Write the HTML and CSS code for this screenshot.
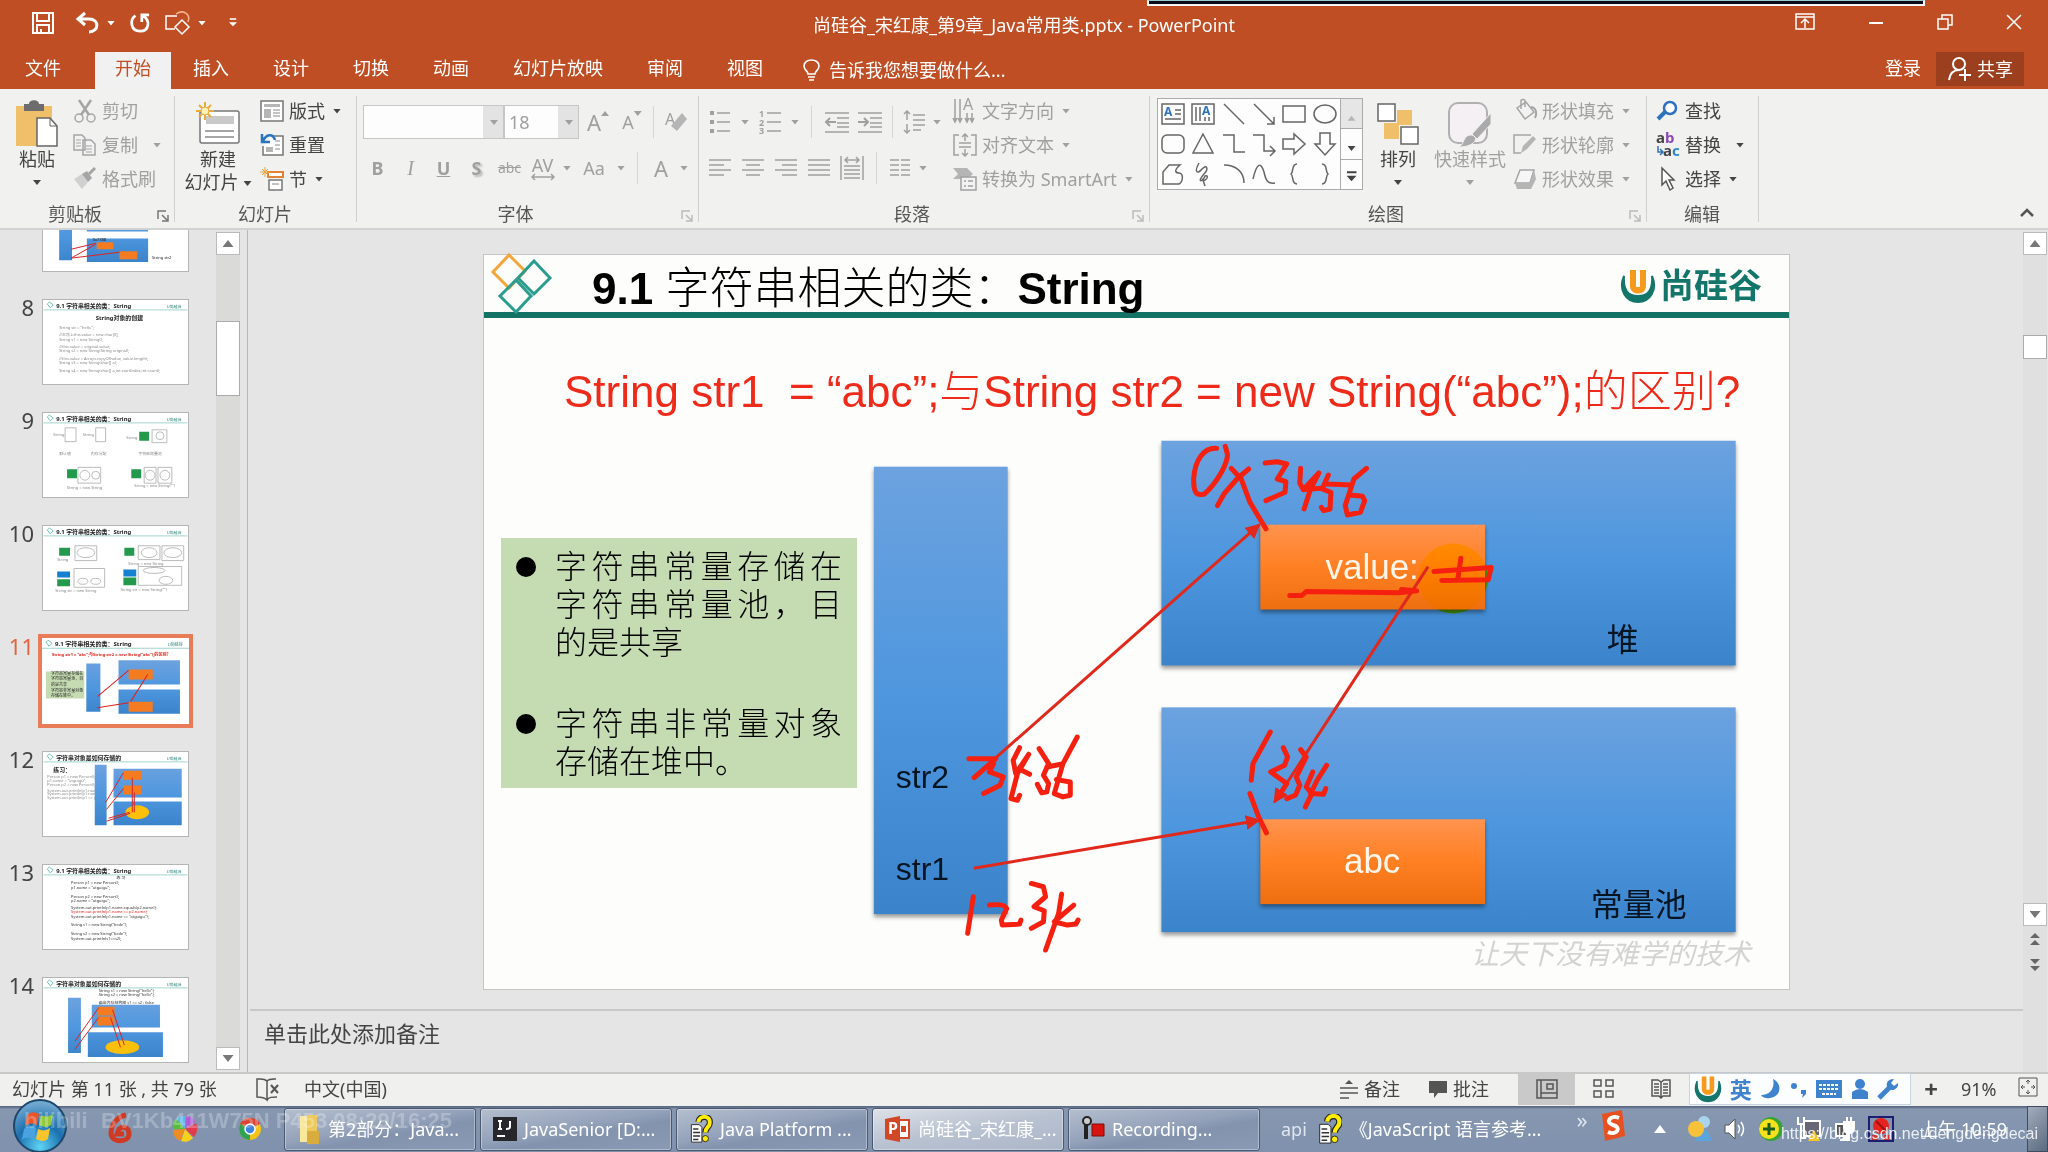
FILE: index.html
```html
<!DOCTYPE html>
<html lang="zh-CN">
<head>
  <meta charset="UTF-8">
  <meta name="viewport" content="width=device-width, initial-scale=1.0">
  <title>尚硅谷_宋红康_第9章_Java常用类.pptx - PowerPoint</title>
  <link rel="stylesheet" href="styles.css">
</head>
<body>
  <!-- shared drawings -->
  <svg class="defs" width="0" height="0">
    <defs>
      <linearGradient id="blue" x1="0" y1="0" x2="0" y2="1">
        <stop offset="0" stop-color="#6ca2df"/>
        <stop offset="0.5" stop-color="#4f97de"/>
        <stop offset="1" stop-color="#3b84cb"/>
      </linearGradient>
      <linearGradient id="orange" x1="0" y1="0" x2="0" y2="1">
        <stop offset="0" stop-color="#ff934f"/>
        <stop offset="0.5" stop-color="#ff8023"/>
        <stop offset="1" stop-color="#ee6f10"/>
      </linearGradient>
      <marker id="tip" viewBox="0 0 10 10" refX="9" refY="5" markerWidth="5" markerHeight="5" orient="auto">
        <path d="M0 0L10 5L0 10Z" fill="#e0281c"/>
      </marker>
      <symbol id="logo-u" viewBox="0 0 36 36">
        <path d="M4 8C-2 22 6 34 18 34C30 34 38 22 32 8C33 22 28 28 18 28C8 28 3 22 4 8Z" fill="#14766a" stroke="#14766a" stroke-width="2"/>
        <path d="M10 2V18C10 28 26 28 26 18V2H20V19H16V2Z" fill="#f59a1c"/>
      </symbol>
      <symbol id="help" viewBox="0 0 24 32">
        <path d="M1 11H10L13 14V31H1Z" fill="#fff" stroke="#222" stroke-width="1"/>
        <path d="M3 16H9M3 20H11M3 24H11M3 28H9" stroke="#333" stroke-width="1.5"/>
        <path d="M9 8C10 0 23 0 22 9C22 14 17 14 17 20" fill="none" stroke="#222" stroke-width="7"/>
        <path d="M9 8C10 0 23 0 22 9C22 14 17 14 17 20" fill="none" stroke="#ffee00" stroke-width="4.500"/>
        <circle cx="17" cy="27" r="3.500" fill="#ffee00" stroke="#222"/>
      </symbol>
      <symbol id="thumb-head" viewBox="0 0 146 85">
        <path d="M4 4L6 2L10 5L7 8Z" fill="none" stroke="#4fb3a6" stroke-width=".8"/>
        <path d="M0 10H146" stroke="#9fd3cb" stroke-width="1"/>
        <text x="125" y="8" class="t-logo">U尚硅谷</text>
      </symbol>
    </defs>
  </svg>

  <header class="titlebar">
    <div class="record-strip"></div>
    <div class="qat">
      <button class="save" aria-label="保存"><svg width="22" height="22" viewBox="0 0 22 22"><path d="M1 1H21V21H1ZM5 1V9H17V1M5 21V13H17V21M9 21V17" fill="none" stroke="#fff" stroke-width="2"/></svg></button>
      <button aria-label="撤消"><svg width="24" height="22" viewBox="0 0 24 22"><path d="M9 1L2 7L9 13M3 7H13C24 7 23 20 13 20" fill="none" stroke="#fff" stroke-width="3"/></svg><i class="dd"></i></button>
      <button aria-label="重复"><svg width="20" height="22" viewBox="0 0 22 22"><path d="M6 3C-1 8 1 20 11 20C21 20 23 8 14 3M13 10V2H21" fill="none" stroke="#fff" stroke-width="3"/></svg></button>
      <button aria-label="形状"><svg width="26" height="24" viewBox="0 0 26 24"><path d="M12 5H1V18H10M17 9L24 16L17 23L10 16Z" fill="none" stroke="#fff" stroke-width="1.500"/><path d="M11 3C18 -2 26 3 23 11" fill="none" stroke="#f7b48c" stroke-width="1.500"/></svg><i class="dd"></i></button>
      <button class="custom" aria-label="自定义"><svg width="8" height="10" viewBox="0 0 10 12"><path d="M1 1H9" stroke="#fff" stroke-width="2"/><path d="M0 5H10L5 10Z" fill="#fff"/></svg></button>
    </div>
    <h1 class="doc-title">尚硅谷_宋红康_第9章_Java常用类.pptx - PowerPoint</h1>
    <div class="win-controls">
      <button aria-label="功能区显示选项"><svg width="20" height="17" viewBox="0 0 20 17"><path d="M1 1H19V16H1ZM1 4H19M10 15V6M6 10L10 6L14 10" fill="none" stroke="#fff" stroke-width="1.500"/></svg></button>
      <button aria-label="最小化"><svg width="16" height="16" viewBox="0 0 16 16"><path d="M1 9H15" stroke="#fff" stroke-width="2"/></svg></button>
      <button aria-label="还原"><svg width="16" height="16" viewBox="0 0 16 16"><path d="M1 5H11V15H1ZM5 5V1H15V11H11" fill="none" stroke="#fff" stroke-width="1.500"/></svg></button>
      <button aria-label="关闭"><svg width="16" height="16" viewBox="0 0 16 16"><path d="M1 1L15 15M15 1L1 15" stroke="#fff" stroke-width="1.500"/></svg></button>
    </div>
  </header>

  <nav class="tabs">
    <a class="file" href="#">文件</a>
    <a class="active" href="#">开始</a>
    <a href="#">插入</a>
    <a href="#">设计</a>
    <a href="#">切换</a>
    <a href="#">动画</a>
    <a href="#">幻灯片放映</a>
    <a href="#">审阅</a>
    <a href="#">视图</a>
    <button class="tell-me"><svg width="17" height="22" viewBox="0 0 17 22"><path d="M5 15C5 12 1 11 1 7C1 -1 16 -1 16 7C16 11 12 12 12 15ZM5 18H12M6 21H11" fill="none" stroke="#fff" stroke-width="1.600"/></svg>告诉我您想要做什么...</button>
    <a class="login" href="#">登录</a>
    <button class="share"><svg width="24" height="24" viewBox="0 0 24 24"><circle cx="12" cy="7" r="6" fill="none" stroke="#fff" stroke-width="2"/><path d="M2 23C3 16 7 13 12 13M18 12V24M12 18H24" fill="none" stroke="#fff" stroke-width="2"/></svg>共享</button>
  </nav>

  <section class="ribbon">
    <div class="group g-clip">
      <div class="body">
        <button class="big"><svg width="44" height="48" viewBox="0 0 44 48"><path d="M1 6H37V46H1Z" fill="#efc069"/><path d="M9 4H14C14 -1 24 -1 24 4H29V11H9Z" fill="#6d6d6d"/><path d="M22 18H35L42 26V46H22Z" fill="#fff" stroke="#666" stroke-width="1.500"/><path d="M35 18V26H42" fill="none" stroke="#666"/></svg><span>粘贴</span><i class="dd"></i></button>
        <div class="stack off">
          <button><svg width="24" height="24" viewBox="0 0 24 24"><path d="M6 1L16 16M18 1L8 16" stroke="#a5a5a5" stroke-width="2.500"/><circle cx="6" cy="19" r="4" fill="none" stroke="#a5a5a5" stroke-width="1.500"/><circle cx="18" cy="19" r="4" fill="none" stroke="#a5a5a5" stroke-width="1.500"/></svg>剪切</button>
          <button><svg width="24" height="24" viewBox="0 0 24 24"><path d="M1 2H9L12 5V17H1ZM10 7H18L22 11V22H10Z" fill="#f2f2f2" stroke="#a5a5a5" stroke-width="1.500"/><path d="M3 7H8M3 10H8M3 13H8M13 13H19M13 16H19M13 19H19" stroke="#a5a5a5"/></svg>复制<i class="dd far"></i></button>
          <button><svg width="24" height="24" viewBox="0 0 24 24"><path d="M1 12L9 7L15 15L9 22Z" fill="#d0d0d0"/><path d="M9 7L14 4L19 11L15 15Z" fill="#a5a5a5"/><path d="M16 7L22 1" stroke="#a5a5a5" stroke-width="3"/></svg>格式刷</button>
        </div>
      </div>
      <div class="label">剪贴板<svg class="launch" width="12" height="12" viewBox="0 0 12 12"><path d="M1 9V1H9M5 5L10 10M11 5V11H5" fill="none" stroke="#777" stroke-width="1.500"/></svg></div>
    </div>

    <div class="group g-slides">
      <div class="body">
        <button class="big"><svg width="44" height="44" viewBox="0 0 44 44"><rect x="4" y="9" width="39" height="32" rx="2" fill="#fff" stroke="#777" stroke-width="1.500"/><path d="M10 14H38V22H10Z" fill="#c9c9c9"/><path d="M9 29H38M9 35H38" stroke="#888" stroke-width="1.500"/><path d="M9 0V18M0 9H18M3 3L15 15M15 3L3 15" stroke="#e9aa3c" stroke-width="2"/><circle cx="9" cy="9" r="4" fill="#fff0b8" stroke="#e9aa3c"/></svg><span>新建</span><span>幻灯片<i class="dd"></i></span></button>
        <div class="stack">
          <button><svg width="24" height="24" viewBox="0 0 24 24"><path d="M1 2H23V22H1Z" fill="#fff" stroke="#777" stroke-width="1.500"/><path d="M4 5H20V8H4ZM4 10H11V19H4Z" fill="#b5b5b5"/><path d="M13 11H20M13 14H20M13 17H20" stroke="#888"/></svg>版式<i class="dd"></i></button>
          <button><svg width="24" height="24" viewBox="0 0 24 24"><path d="M12 3H23V22H3V13" fill="#fff" stroke="#777" stroke-width="1.500"/><path d="M6 14H13V19H6Z" fill="#b5b5b5"/><path d="M15 8H20M15 12H20M15 16H20" stroke="#888"/><path d="M2 1V9H10M3 8C6 1 13 0 15 7" fill="none" stroke="#2b74c0" stroke-width="2.500"/></svg>重置</button>
          <button><svg width="24" height="24" viewBox="0 0 24 24"><path d="M8 5H23V10H8Z" fill="#fff" stroke="#e08334" stroke-width="2"/><path d="M9 13H22V23H9Z" fill="#fff" stroke="#777" stroke-width="1.500"/><path d="M12 17H19" stroke="#888"/><path d="M5 0V10M0 5H10M2 2L8 8M8 2L2 8" stroke="#e9a23c"/></svg>节<i class="dd"></i></button>
        </div>
      </div>
      <div class="label">幻灯片</div>
    </div>

    <div class="group g-font off">
      <div class="body rows">
        <div class="row">
          <div class="combo name"><select aria-label="字体"><option></option></select><i class="dd"></i></div>
          <div class="combo size"><select aria-label="字号"><option>18</option></select><i class="dd"></i></div>
          <button class="w38 grow" aria-label="增大字号">A<i class="dd up"></i></button>
          <button class="w30 shrink" aria-label="减小字号">A<i class="dd"></i></button>
          <span class="sep"></span>
          <button class="w34" aria-label="清除格式"><svg width="24" height="26" viewBox="0 0 24 26"><text x="0" y="16" class="ico-a">A</text><path d="M6 17L17 4L22 10L12 22Z" fill="#b5b5b5"/></svg></button>
        </div>
        <div class="row">
          <button class="w33"><b>B</b></button>
          <button class="w33 ital">I</button>
          <button class="w33"><u>U</u></button>
          <button class="w33 shad">S</button>
          <button class="w33 strike">abc</button>
          <button class="w33 av">AV<svg width="24" height="7" viewBox="0 0 24 7"><path d="M1 3H23M4 0L1 3L4 6M20 0L23 3L20 6" fill="none" stroke="#a0a0a0" stroke-width="1.500"/></svg></button>
          <i class="dd"></i>
          <button class="w38">Aa</button>
          <i class="dd"></i>
          <span class="sep wide"></span>
          <button class="w30 color">A</button>
          <i class="dd"></i>
        </div>
      </div>
      <div class="label">字体<svg class="launch" width="12" height="12" viewBox="0 0 12 12"><path d="M1 9V1H9M5 5L10 10M11 5V11H5" fill="none" stroke="#bbb" stroke-width="1.500"/></svg></div>
    </div>

    <div class="group g-para off">
      <div class="body">
        <div class="rows para-left">
          <div class="row">
            <button class="w34" aria-label="项目符号"><svg width="20" height="22" viewBox="0 0 20 22"><path d="M0 2H4M0 11H4M0 20H4" stroke="#a0a0a0" stroke-width="4"/><path d="M7 2H20M7 11H20M7 20H20" stroke="#a0a0a0" stroke-width="1.500"/></svg></button><i class="dd"></i>
            <button class="w34" aria-label="编号"><svg width="22" height="24" viewBox="0 0 22 24"><text x="0" y="7" class="ico-n">1</text><text x="0" y="16" class="ico-n">2</text><text x="0" y="24" class="ico-n">3</text><path d="M8 3H22M8 12H22M8 21H22" stroke="#a0a0a0" stroke-width="1.500"/></svg></button><i class="dd"></i>
            <span class="sep wide"></span>
            <button class="w33" aria-label="减少缩进"><svg width="24" height="22" viewBox="0 0 24 22"><path d="M0 2H24M12 7H24M12 12H24M12 16H24M0 21H24" stroke="#a0a0a0" stroke-width="1.500"/><path d="M11 11H1M5 7L1 11L5 15" fill="none" stroke="#a0a0a0" stroke-width="2"/></svg></button>
            <button class="w33" aria-label="增加缩进"><svg width="24" height="22" viewBox="0 0 24 22"><path d="M0 2H24M12 7H24M12 12H24M12 16H24M0 21H24" stroke="#a0a0a0" stroke-width="1.500"/><path d="M0 11H10M6 7L10 11L6 15" fill="none" stroke="#a0a0a0" stroke-width="2"/></svg></button>
            <span class="sep"></span>
            <button class="w30" aria-label="行距"><svg width="22" height="26" viewBox="0 0 22 26"><path d="M4 11V2M1 5L4 2L7 5M4 15V24M1 21L4 24L7 21M10 6H22M10 11H22M10 16H22M10 21H18" fill="none" stroke="#a0a0a0" stroke-width="1.500"/></svg></button><i class="dd"></i>
          </div>
          <div class="row">
            <button class="w33" aria-label="左对齐"><svg width="22" height="18" viewBox="0 0 22 18"><path d="M0 1H22M0 6H15M0 11H22M0 16H15" stroke="#a0a0a0" stroke-width="1.500"/></svg></button>
            <button class="w33" aria-label="居中"><svg width="22" height="18" viewBox="0 0 22 18"><path d="M0 1H22M4 6H18M0 11H22M4 16H18" stroke="#a0a0a0" stroke-width="1.500"/></svg></button>
            <button class="w33" aria-label="右对齐"><svg width="22" height="18" viewBox="0 0 22 18"><path d="M0 1H22M7 6H22M0 11H22M7 16H22" stroke="#a0a0a0" stroke-width="1.500"/></svg></button>
            <button class="w33" aria-label="两端对齐"><svg width="22" height="18" viewBox="0 0 22 18"><path d="M0 1H22M0 6H22M0 11H22M0 16H22" stroke="#a0a0a0" stroke-width="1.500"/></svg></button>
            <button class="w33" aria-label="分散对齐"><svg width="24" height="24" viewBox="0 0 24 24"><path d="M1 0V24M23 0V24M4 10H20M4 14H20M4 18H20M4 22H20M5 4H19M8 1L5 4L8 7M16 1L19 4L16 7" fill="none" stroke="#a0a0a0" stroke-width="1.500"/></svg></button>
            <span class="sep wide"></span>
            <button class="w30" aria-label="分栏"><svg width="20" height="18" viewBox="0 0 20 18"><path d="M0 1H9M0 6H9M0 11H9M0 16H9M11 1H20M11 6H20M11 11H20M11 16H20" stroke="#a0a0a0" stroke-width="1.500"/></svg></button><i class="dd"></i>
          </div>
        </div>
        <div class="stack">
          <button><svg width="24" height="26" viewBox="0 0 24 26"><path d="M2 1V22M7 1V22M14 15V22M19 15V22M0 20L2 24L4 20M5 20L7 24L9 20M12 20L14 24L16 20M17 20L19 24L21 20" fill="none" stroke="#a0a0a0" stroke-width="1.500"/><text x="10" y="12" class="ico-a">A</text></svg>文字方向<i class="dd"></i></button>
          <button><svg width="24" height="24" viewBox="0 0 24 24"><path d="M6 2H1V22H6M18 2H23V22H18M12 1V8M9 4L12 1L15 4M12 16V23M9 20L12 23L15 20M6 10H18M6 14H18" fill="none" stroke="#a0a0a0" stroke-width="1.500"/></svg>对齐文本<i class="dd"></i></button>
          <button><svg width="24" height="24" viewBox="0 0 24 24"><path d="M0 1H14L20 7L14 12H0L5 7Z" fill="#b5b5b5"/><path d="M8 10H23V23H8Z" fill="#f2f2f2" stroke="#a0a0a0" stroke-width="1.500"/><path d="M11 14H13M15 14H20M11 19H13M15 19H20" stroke="#a0a0a0" stroke-width="1.500"/></svg>转换为 SmartArt<i class="dd"></i></button>
        </div>
      </div>
      <div class="label">段落<svg class="launch" width="12" height="12" viewBox="0 0 12 12"><path d="M1 9V1H9M5 5L10 10M11 5V11H5" fill="none" stroke="#bbb" stroke-width="1.500"/></svg></div>
    </div>

    <div class="group g-draw">
      <div class="body">
        <div class="gallery">
          <div class="shapes">
            <svg viewBox="0 0 24 24"><path d="M1 2H23V22H1Z"/><text x="3" y="14" class="ico-b">A</text><path d="M14 8H20M14 12H20M4 17H20"/></svg>
            <svg viewBox="0 0 24 24"><path d="M1 2H23V22H1ZM5 5V19M9 5V19M14 15V19M18 15V19"/><text x="11" y="13" class="ico-b">A</text></svg>
            <svg viewBox="0 0 24 24"><path d="M2 2L22 22"/></svg>
            <svg viewBox="0 0 24 24"><path d="M2 2L22 22M22 15V22H15"/></svg>
            <svg viewBox="0 0 24 24"><path d="M1 4H23V20H1Z"/></svg>
            <svg viewBox="0 0 24 24"><ellipse cx="12" cy="12" rx="11" ry="9"/></svg>
            <svg viewBox="0 0 24 24"><rect x="1" y="3" width="22" height="18" rx="5"/></svg>
            <svg viewBox="0 0 24 24"><path d="M12 2L22 21H2Z"/></svg>
            <svg viewBox="0 0 24 24"><path d="M1 3H12V20H23"/></svg>
            <svg viewBox="0 0 24 24"><path d="M1 3H12V19H22M18 14L23 19L18 24"/></svg>
            <svg viewBox="0 0 24 24"><path d="M1 7H12V2L23 12L12 22V17H1Z"/></svg>
            <svg viewBox="0 0 24 24"><path d="M7 1H17V12H22L12 23L2 12H7Z"/></svg>
            <svg viewBox="0 0 24 24"><path d="M2 22V10L8 3H19C12 9 15 11 18 11C23 11 22 20 18 22Z"/></svg>
            <svg viewBox="0 0 24 24"><path d="M8 1C2 12 8 11 10 8C16 1 18 7 13 12C5 21 12 20 14 14C19 12 15 20 12 18L14 24"/></svg>
            <svg viewBox="0 0 24 24"><path d="M2 3C14 3 22 10 22 21"/></svg>
            <svg viewBox="0 0 24 24"><path d="M1 17C5 0 9 0 12 10C14 20 17 22 23 21"/></svg>
            <svg viewBox="0 0 24 24"><path d="M15 2C9 2 12 10 9 12C12 14 9 22 15 22"/></svg>
            <svg viewBox="0 0 24 24"><path d="M9 2C15 2 12 10 15 12C12 14 15 22 9 22"/></svg>
          </div>
          <div class="gal-scroll"><button aria-label="上一行" class="up"><i class="dd"></i></button><button aria-label="下一行"><i class="dd"></i></button><button aria-label="其他"><i class="dd line"></i></button></div>
        </div>
        <button class="big arrange"><svg width="42" height="44" viewBox="0 0 42 44"><path d="M20 8H35V23H20ZM7 21H22V37H7Z" fill="#efc069"/><path d="M1 2H18V19H1ZM24 25H41V42H24Z" fill="#fff" stroke="#666" stroke-width="1.500"/></svg><span>排列</span><i class="dd"></i></button>
        <button class="big quick off"><svg width="46" height="48" viewBox="0 0 46 48"><rect x="2" y="3" width="38" height="40" rx="9" fill="#f4f0f4" stroke="#b0b0b0" stroke-width="2"/><path d="M12 47C18 44 16 34 25 35C33 38 27 47 12 47Z" fill="#aaa" stroke="#f0f0f0"/><path d="M25 34L44 13V24L30 39Z" fill="#aaa" stroke="#f0f0f0"/></svg><span>快速样式</span><i class="dd"></i></button>
        <div class="stack off">
          <button><svg width="24" height="24" viewBox="0 0 24 24"><path d="M4 9L13 3L21 13L12 20Z" fill="#f2f2f2" stroke="#a5a5a5" stroke-width="1.500"/><path d="M8 10V2C8 0 12 0 12 2V8" fill="none" stroke="#a5a5a5" stroke-width="1.500"/><path d="M18 8C24 9 24 15 22 19" fill="none" stroke="#a5a5a5" stroke-width="2"/></svg>形状填充<i class="dd"></i></button>
          <button><svg width="24" height="24" viewBox="0 0 24 24"><path d="M18 2H1V20H8" fill="none" stroke="#a5a5a5" stroke-width="1.500"/><path d="M8 20L10 13L20 3L23 6L14 16Z" fill="#b5b5b5"/></svg>形状轮廓<i class="dd"></i></button>
          <button><svg width="24" height="24" viewBox="0 0 24 24"><path d="M7 3H21L17 16H2Z" fill="#f6f6f6" stroke="#a5a5a5" stroke-width="1.500"/><path d="M21 3L23 12L18 22H4L2 16H17Z" fill="#b5b5b5"/></svg>形状效果<i class="dd"></i></button>
        </div>
      </div>
      <div class="label">绘图<svg class="launch" width="12" height="12" viewBox="0 0 12 12"><path d="M1 9V1H9M5 5L10 10M11 5V11H5" fill="none" stroke="#bbb" stroke-width="1.500"/></svg></div>
    </div>

    <div class="group g-edit">
      <div class="body">
        <div class="stack">
          <button><svg width="24" height="24" viewBox="0 0 24 24"><circle cx="14" cy="9" r="6" fill="#fff" stroke="#2e71bd" stroke-width="2.500"/><path d="M9 13L2 20" stroke="#2e71bd" stroke-width="4"/></svg>查找</button>
          <button><svg width="24" height="26" viewBox="0 0 24 26"><text x="0" y="11" class="ico-r">a<tspan fill="#8b4bb5">b</tspan></text><text x="7" y="24" class="ico-r">a<tspan fill="#2e86d4">c</tspan></text><path d="M2 14V20H6M4 17L7 20L4 23" fill="none" stroke="#2e71bd" stroke-width="1.500"/></svg>替换<i class="dd far"></i></button>
          <button><svg width="24" height="24" viewBox="0 0 24 24"><path d="M6 1L6 18L10 14L14 23L17 21L13 13H18Z" fill="#fff" stroke="#555" stroke-width="1.500"/></svg>选择<i class="dd"></i></button>
        </div>
      </div>
      <div class="label">编辑</div>
    </div>
    <button class="collapse" aria-label="折叠功能区"><svg width="14" height="9" viewBox="0 0 14 9"><path d="M1 8L7 2L13 8" fill="none" stroke="#555" stroke-width="2.500"/></svg></button>
  </section>

  <main class="work">
    <aside class="slides-pane">
      <ol class="thumbs">
        <li><span></span><svg class="thumb" viewBox="0 0 146 85"><path d="M16 20H29V74H16ZM44 20H106V45H44ZM44 52H106V76H44Z" fill="url(#blue)"/><path d="M54 56H71V63H54ZM77 65H95V73H77Z" fill="#f47b20"/><path d="M28 63L53 57M28 72L53 58M28 72L77 66" stroke="#d22" fill="none"/><text x="110" y="73" class="t-xs">String str2</text><text x="50" y="55" class="t-xs">0x7788</text></svg></li>
        <li><span>8</span><svg class="thumb" viewBox="0 0 146 85"><use href="#thumb-head"/><text x="13" y="8" class="t-title">9.1 字符串相关的类：String</text><text x="53" y="20" class="t-title">String对象的创建</text><g class="t-code"><text x="16" y="29">String str = "hello";</text><text x="16" y="36">//本质上this.value = new char[0];</text><text x="16" y="41">String s1 = new String();</text><text x="16" y="49">//this.value = original.value;</text><text x="16" y="53">String s2 = new String(String original);</text><text x="16" y="61">//this.value = Arrays.copyOf(value, value.length);</text><text x="16" y="65">String s3 = new String(char[] a);</text><text x="16" y="73">String s4 = new String(char[] a,int startIndex,int count);</text></g></svg></li>
        <li><span>9</span><svg class="thumb" viewBox="0 0 146 85"><use href="#thumb-head"/><text x="13" y="8" class="t-title">9.1 字符串相关的类：String</text><path d="M22 15H33V29H22ZM53 15H63V29H53ZM110 17H125V30H110ZM35 55H58V71H35ZM102 55H114V71H102ZM116 55H130V71H116Z" class="t-line"/><circle cx="118" cy="23" r="4" class="t-line"/><circle cx="42" cy="63" r="5" class="t-line"/><circle cx="53" cy="63" r="4" class="t-line"/><circle cx="108" cy="63" r="5" class="t-line"/><circle cx="123" cy="63" r="5" class="t-line"/><path d="M97 19H107V28H97ZM24 57H34V66H24ZM89 57H99V66H89Z" fill="#22994d"/><g class="t-code"><text x="10" y="23">String</text><text x="40" y="23">String</text><text x="84" y="26">String</text><text x="16" y="42">默认值</text><text x="48" y="42">内存分配</text><text x="96" y="43">字符串常量池</text><text x="24" y="77">String = new String</text><text x="92" y="75">String = new String("")</text></g></svg></li>
        <li><span>10</span><svg class="thumb" viewBox="0 0 146 85"><use href="#thumb-head"/><text x="13" y="8" class="t-title">9.1 字符串相关的类：String</text><path d="M32 20H54V35H32ZM96 20H118V34H96ZM120 20H142V35H120ZM31 43H62V62H31ZM96 41H140V60H96Z" class="t-line"/><ellipse cx="43" cy="27" rx="9" ry="5" class="t-line"/><ellipse cx="107" cy="27" rx="8" ry="5" class="t-line"/><ellipse cx="131" cy="27" rx="9" ry="5" class="t-line"/><ellipse cx="40" cy="56" rx="5" ry="3" class="t-line"/><ellipse cx="53" cy="56" rx="5" ry="3" class="t-line"/><ellipse cx="112" cy="45" rx="11" ry="3" class="t-line"/><ellipse cx="124" cy="55" rx="7" ry="4" class="t-line"/><path d="M16 22H27V30H16ZM82 22H92V30H82ZM14 54H27V61H14ZM81 52H94V60H81Z" fill="#22994d"/><path d="M14 46H27V52H14ZM81 44H94V51H81Z" fill="#1580d0"/><g class="t-code"><text x="14" y="35">String</text><text x="86" y="39">String = new String</text><text x="12" y="67">String str = new String</text><text x="78" y="66">String str = new String("")</text></g></svg></li>
        <li class="current"><span>11</span><svg class="thumb" viewBox="0 0 146 85"><use href="#thumb-head"/><text x="13" y="8" class="t-title">9.1 字符串相关的类：String</text><text x="10" y="18" class="t-red">String str1 = “abc”;与String str2 = new String(“abc”);的区别？</text><path d="M4 33H42V60H4Z" fill="#c5dcb2"/><g class="t-xs"><text x="9" y="37">字符串常量存储在</text><text x="9" y="42">字符串常量池，目</text><text x="9" y="47">的是共享</text><text x="9" y="53">字符串非常量对象</text><text x="9" y="58">存储在堆中。</text></g><path d="M44 25H58V73H44ZM76 22H137V46H76ZM76 51H137V75H76Z" fill="url(#blue)"/><path d="M86 31H110V41H86ZM86 63H110V73H86Z" fill="#f47b20"/><path d="M55 58L86 32M55 69L86 64M105 36L88 63" stroke="#d22" fill="none"/></svg></li>
        <li><span>12</span><svg class="thumb" viewBox="0 0 146 85"><use href="#thumb-head"/><text x="13" y="8" class="t-title">字符串对象是如何存储的</text><text x="10" y="20" class="t-title">练习：</text><g class="t-code"><text x="4" y="26">Person p1 = new Person();</text><text x="4" y="30">p1.name = "atguigu";</text><text x="4" y="34">Person p2 = new Person();</text><text x="4" y="40">System.out.println(p1.name);</text><text x="4" y="44">System.out.println(p1.name);</text><text x="4" y="48">System.out.println(p1 == p2);</text></g><path d="M52 13H64V74H52ZM71 17H140V46H71ZM71 50H140V74H71Z" fill="url(#blue)"/><path d="M81 19H99V28H81ZM81 34H99V43H81Z" fill="#f47b20"/><ellipse cx="95" cy="61" rx="12" ry="7" fill="#fcbf0b"/><path d="M63 51L81 21M64 58L81 37M66 67L87 61M64 70L88 62M90 26V61M92 41V61" stroke="#d22" fill="none"/></svg></li>
        <li><span>13</span><svg class="thumb" viewBox="0 0 146 85"><use href="#thumb-head"/><text x="13" y="8" class="t-title">9.1 字符串相关的类：String</text><text x="74" y="14" class="t-xs">练 习</text><g class="t-code dark"><text x="28" y="19">Person p1 = new Person();</text><text x="28" y="24">p1.name = "atguigu";</text><text x="28" y="33">Person p2 = new Person();</text><text x="28" y="37">p2.name = "atguigu";</text><text x="28" y="45">System.out.println(p1.name.equals(p2.name));</text><text x="28" y="49" fill="#d22">System.out.println(p1.name == p2.name);</text><text x="28" y="54">System.out.println(p1.name == "atguigu");</text><text x="28" y="62">String s1 = new String("bcde");</text><text x="28" y="71">String s2 = new String("bcde");</text><text x="28" y="76">System.out.println(s1==s2);</text></g></svg></li>
        <li><span>14</span><svg class="thumb" viewBox="0 0 146 85"><use href="#thumb-head"/><text x="13" y="8" class="t-title">字符串对象是如何存储的</text><g class="t-code dark"><text x="56" y="14">String s1 = new String("hello");</text><text x="56" y="18">String s2 = new String("hello");</text><text x="56" y="26">画出内存结构图 s1 == s2 : false</text></g><path d="M25 20H38V76H25ZM49 27H118V50H49ZM45 55H121V80H45Z" fill="url(#blue)"/><path d="M55 29H72V38H55ZM55 39H72V48H55Z" fill="#f47b20"/><ellipse cx="80" cy="70" rx="17" ry="7" fill="#fcbf0b"/><path d="M32 64L56 30M32 72L56 40M68 40L78 70M70 32L82 68" stroke="#d22" fill="none"/></svg></li>
      </ol>
      <div class="vscroll">
        <button aria-label="向上"><i class="dd up"></i></button>
        <div class="bar"></div>
        <button aria-label="向下"><i class="dd"></i></button>
      </div>
    </aside>

    <div class="editor">
      <div class="stage">
        <article class="slide">
          <header class="slide-head">
            <svg class="diamonds" width="62" height="60" viewBox="0 0 62 60" fill="none" stroke-width="3"><path d="M25 1L41 17L25 34L9 18Z" stroke="#f2a63b"/><path d="M50 7L66 24L50 40L34 24Z" stroke="#2b9d8e"/><path d="M32 26L47 42L32 58L16 42Z" stroke="#2b9d8e"/></svg>
            <h2>9.1 <span>字符串相关的类：</span>String</h2>
            <div class="brand"><svg width="36" height="36"><use href="#logo-u"/></svg>尚硅谷</div>
          </header>
          <p class="question">String str1  = “abc”;与String str2 = new String(“abc”);的区别?</p>
          <ul class="points">
            <li>字符串常量存储在字符串常量池，目的是共享</li>
            <li>字符串非常量对象存储在堆中。</li>
          </ul>
          <svg class="diagram" viewBox="0 0 1306 735">
            <g class="box" fill="url(#blue)">
              <rect x="390" y="212" width="134" height="448"/>
              <rect x="678" y="186" width="575" height="225"/>
              <rect x="678" y="453" width="575" height="225"/>
            </g>
            <g class="box" fill="url(#orange)">
              <rect x="777" y="270" width="225" height="85"/>
              <rect x="777" y="565" width="225" height="85"/>
            </g>
            <g class="names">
              <text x="412" y="534">str2</text>
              <text x="412" y="626">str1</text>
              <text x="1124" y="397">堆</text>
              <text x="1108" y="662">常量池</text>
            </g>
            <g class="values">
              <text x="889" y="324">value:</text>
              <text x="889" y="619">abc</text>
            </g>
            <text x="1268" y="710" class="motto">让天下没有难学的技术</text>
            <circle class="spot" cx="970" cy="324" r="35"/>
            <g stroke="#e0281c" stroke-width="3">
              <path d="M490 523L776 270" marker-end="url(#tip)"/>
              <path d="M490 614L776 566" marker-end="url(#tip)"/>
              <path d="M945 312L791 548" marker-end="url(#tip)"/>
            </g>
            <!-- pen strokes, one group per part of the slide -->
            <g class="ink" transform="translate(656 -9) scale(.4337 .3333)">
              <path d="M178 608C150 605 128 640 125 700C125 740 130 752 150 745C180 710 205 650 203 625L198 602"/>
              <path d="M212 668L235 700L255 770L292 850M252 670L225 700L195 745L180 780"/>
              <path d="M290 652L318 648L340 655L318 700L338 708L336 740L292 765"/>
              <path d="M372 668L370 712L378 732L414 682M414 682L395 730L380 790M378 732L418 728"/>
              <path d="M436 688L422 730L442 740L440 790L425 795L420 785M432 715L490 718"/>
              <path d="M524 668L495 700L475 780L480 808L510 800L520 765L515 752L485 748"/>
              <path d="M347 1050L375 1050L385 1038L600 1042L640 1036L605 1032"/>
              <path d="M680 978L812 966L805 1003L698 1005M742 938L735 1000"/>
            </g>
            <g class="ink" transform="translate(-4 366) scale(.4337 .3333)">
              <path d="M1128 415L1190 415L1140 472M1185 430L1175 455L1207 470L1200 495L1162 520"/>
              <path d="M1245 382L1230 420L1236 460L1266 402M1266 402L1240 460L1225 535L1240 540L1245 525M1250 450L1268 462"/>
              <path d="M1290 385L1312 430L1300 465L1312 490L1308 515L1296 518L1286 492M1308 440L1340 432"/>
              <path d="M1378 350L1345 430L1325 520L1345 530L1362 525L1362 485L1330 478"/>
              <path d="M1138 830L1125 940M1175 855Q1210 850 1215 865L1203 900L1205 915L1245 912L1248 900"/>
              <path d="M1272 790L1300 800L1305 830L1278 860L1302 872L1300 905L1272 925"/>
              <path d="M1342 822L1335 880L1305 990M1370 855L1325 905L1355 915L1375 912L1380 900"/>
            </g>
            <g class="ink" transform="translate(656 366) scale(.4337 .3333)">
              <path d="M302 335L262 430L258 480M255 520L275 590L293 638"/>
              <path d="M332 382L342 410L335 435L303 455L340 490L320 530"/>
              <path d="M372 388L385 410L362 470L370 495L360 525L340 535"/>
              <path d="M400 455L385 500L398 520L383 560M432 435L410 480L395 520L425 522L430 505"/>
            </g>
          </svg>
        </article>
      </div>
      <div class="notes">单击此处添加备注</div>
    </div>
    <div class="vscroll main-scroll">
      <button aria-label="向上滚动"><i class="dd up"></i></button>
      <div class="bar"></div>
      <button aria-label="向下滚动"><i class="dd"></i></button>
      <button class="page" aria-label="上一张"><svg width="12" height="14" viewBox="0 0 12 14"><path d="M1 6L6 1L11 6ZM1 13L6 8L11 13Z" fill="#666"/></svg></button>
      <button class="page" aria-label="下一张"><svg width="12" height="14" viewBox="0 0 12 14"><path d="M1 1L6 6L11 1ZM1 8L6 13L11 8Z" fill="#666"/></svg></button>
    </div>
  </main>

  <section class="status">
    <span class="count">幻灯片 第 11 张 , 共 79 张</span>
    <svg width="24" height="24" viewBox="0 0 24 24"><path d="M11 4C8 1 4 2 1 2V20C4 20 8 20 11 23ZM11 4C13 2 15 2 18 2H20M11 23C13 20 16 20 21 20" fill="none" stroke="#555" stroke-width="1.500"/><path d="M15 8L22 16M22 8L15 16" stroke="#555" stroke-width="2"/></svg>
    <span class="lang">中文(中国)</span>
    <div class="status-right">
      <button class="note-btn"><svg width="18" height="20" viewBox="0 0 18 20"><path d="M5 5L9 1L13 5Z" fill="#555"/><path d="M0 9H18M0 14H18M0 19H9" stroke="#555" stroke-width="1.500"/></svg>备注</button>
      <button class="note-btn"><svg width="18" height="18" viewBox="0 0 18 18"><path d="M0 1H18V13H9L5 18V13H0Z" fill="#555"/></svg>批注</button>
      <button class="view on" aria-label="普通视图"><svg width="22" height="20" viewBox="0 0 22 20"><path d="M1 1H21V19H1ZM5 1V19M5 14H21M11 5H17V10H11Z" fill="none" stroke="#555" stroke-width="1.500"/></svg></button>
      <button class="view" aria-label="幻灯片浏览"><svg width="22" height="20" viewBox="0 0 22 20"><path d="M1 1H8V7H1ZM13 1H20V7H13ZM1 12H8V18H1ZM13 12H20V18H13Z" fill="none" stroke="#555" stroke-width="1.500"/></svg></button>
      <button class="view" aria-label="阅读视图"><svg width="20" height="20" viewBox="0 0 20 20"><path d="M10 3L7 1H1V17H8L10 19L12 17H19V1H13ZM10 3V19M3 5H8M3 8H8M3 11H8M3 14H8M12 5H17M12 8H17M12 11H17M12 14H17" fill="none" stroke="#555" stroke-width="1.500"/></svg></button>
      <div class="ime">
        <svg width="28" height="28"><use href="#logo-u"/></svg>
        <b>英</b>
        <svg width="22" height="22" viewBox="0 0 22 22"><path d="M13 1C22 5 22 18 10 20C6 21 2 19 1 17C11 17 15 9 13 1Z" fill="#3f83cf"/></svg>
        <svg width="18" height="22" viewBox="0 0 18 22"><circle cx="4" cy="8" r="3" fill="#3f83cf"/><path d="M11 12H16V16L12 20L13 16H11Z" fill="#3f83cf"/></svg>
        <svg width="28" height="22" viewBox="0 0 28 22"><rect x="1" y="2" width="26" height="18" fill="#3f83cf"/><path d="M4 7H24M4 11H24M7 16H21" stroke="#fff" stroke-width="2" stroke-dasharray="3 1"/></svg>
        <svg width="18" height="22" viewBox="0 0 18 22"><circle cx="9" cy="6" r="5" fill="#3f83cf"/><path d="M1 21V14Q9 8 17 14V21Z" fill="#3f83cf"/></svg>
        <svg width="22" height="22" viewBox="0 0 22 22"><path d="M2 20L12 10" stroke="#3f83cf" stroke-width="5"/><path d="M17 1C9 1 8 8 12 11C16 14 22 10 21 5L17 8L14 5Z" fill="#3f83cf"/></svg>
      </div>
      <button class="plus">+</button>
      <span class="zoom">91%</span>
      <button class="fit" aria-label="适应窗口"><svg width="20" height="20" viewBox="0 0 20 20"><path d="M1 1H19V19H1ZM10 3V7M10 13V17M3 10H7M13 10H17M8 5L10 3L12 5M8 15L10 17L12 15M5 8L3 10L5 12M15 8L17 10L15 12" fill="none" stroke="#555"/></svg></button>
    </div>
  </section>

  <footer class="taskbar">
    <button class="start" aria-label="开始菜单"><svg width="56" height="56" viewBox="0 0 56 56"><defs><radialGradient id="orb" cx=".5" cy=".9" r=".9"><stop offset="0" stop-color="#5fd3f5"/><stop offset=".5" stop-color="#1b6fae"/><stop offset="1" stop-color="#7db0d4"/></radialGradient></defs><circle cx="28" cy="28" r="26" fill="url(#orb)" stroke="#1d4669" stroke-width="2"/><path d="M15 17C19 13 23 14 27 16L25 27C21 25 17 25 13 28Z" fill="#e8562a"/><path d="M29 17C33 19 37 19 41 16L39 27C35 30 31 29 27 27Z" fill="#92c83e"/><path d="M12 31C16 28 20 28 24 30L22 41C18 39 14 39 10 42Z" fill="#4aa3e0"/><path d="M26 31C30 33 34 33 38 30L36 41C32 44 28 43 24 41Z" fill="#fbc42d"/></svg></button>
    <div class="pins">
      <a href="#" aria-label="录屏"><svg width="24" height="30" viewBox="0 0 24 30"><path d="M18 1C9 3 3 10 3 20C4 29 21 29 21 20C21 13 15 12 11 15L9 20H16" fill="none" stroke="#cf3a25" stroke-width="5"/></svg></a>
      <a href="#" aria-label="相册"><svg width="26" height="28" viewBox="0 0 26 28"><path d="M13 14L4 4C8 0 12 1 14 2Z" fill="#5db7e8"/><path d="M13 14L14 1C20 1 22 5 23 7Z" fill="#b35bd6"/><path d="M13 14L24 8C27 15 24 19 22 22Z" fill="#e33b4e"/><path d="M13 14L21 23C16 28 12 27 9 26Z" fill="#f6d21c"/><path d="M13 14L8 26C2 23 1 18 1 15Z" fill="#f08c21"/><path d="M13 14L1 14C0 9 2 6 4 4Z" fill="#58bd3d"/></svg></a>
      <a href="#" aria-label="Chrome"><svg width="24" height="24" viewBox="0 0 24 24"><circle cx="12" cy="12" r="11" fill="#f3c317"/><path d="M12 12L2 7C6 -1 19 -1 22 7Z" fill="#da4233"/><path d="M12 12L12 23C3 23 -1 14 2 7Z" fill="#2fa352"/><circle cx="12" cy="12" r="5" fill="#3f83e0" stroke="#fff" stroke-width="1.500"/></svg></a>
    </div>
    <div class="tasks">
      <button><svg width="24" height="32" viewBox="0 0 24 32"><path d="M3 3H12V29H3Z" fill="#f9e79b"/><path d="M10 2H20V28H10Z" fill="#ecc95a"/><path d="M10 18H22V31H10Z" fill="#d9ad3d"/></svg>第2部分：Java...</button>
      <button><svg width="24" height="24" viewBox="0 0 24 24"><path d="M0 0H24V24H0Z" fill="#26262b"/><path d="M5 4H9M7 4V12M5 12H9M17 4V10Q17 12 13 12M4 19H12" fill="none" stroke="#fff" stroke-width="2"/></svg>JavaSenior [D:...</button>
      <button><svg width="24" height="28"><use href="#help"/></svg>Java Platform ...</button>
      <button class="on"><svg width="26" height="26" viewBox="0 0 26 26"><path d="M12 4H24V22H12Z" fill="#fff" stroke="#d24726" stroke-width="2"/><path d="M16 10H21V16H16Z" fill="#d24726"/><path d="M0 3L15 0V26L0 23Z" fill="#d24726"/><text x="3" y="18" class="ico-p">P</text></svg>尚硅谷_宋红康_...</button>
      <button><svg width="24" height="28" viewBox="0 0 24 28"><path d="M5 8V24" stroke="#222" stroke-width="4"/><circle cx="6" cy="6" r="4" fill="#ccc" stroke="#222" stroke-width="2"/><path d="M11 9H23V21H11Z" fill="#d8130f" stroke="#7a0c0a"/></svg>Recording...</button>
    </div>
    <div class="links">
      <span>api</span>
      <a href="#"><svg width="24" height="30"><use href="#help"/></svg>《JavaScript 语言参考...</a>
      <span class="more">»</span>
    </div>
    <div class="tray">
      <svg class="sogou" width="26" height="32" viewBox="0 0 26 32"><path d="M2 4L22 0L25 26L5 31Z" fill="#e8511f"/><path d="M19 8C10 4 5 13 13 15C22 17 17 26 8 22" fill="none" stroke="#fff" stroke-width="4"/></svg>
      <svg class="tri" width="12" height="8" viewBox="0 0 12 8"><path d="M0 8L6 0L12 8Z" fill="#fff"/></svg>
      <svg width="24" height="28" viewBox="0 0 24 28"><circle cx="16" cy="7" r="6" fill="#a8d4ee"/><path d="M8 26C8 12 22 10 23 26Z" fill="#5aa5dc"/><circle cx="8" cy="14" r="8" fill="#f6c23a"/></svg>
      <svg width="22" height="24" viewBox="0 0 22 24"><path d="M1 8H5L11 2V22L5 16H1Z" fill="#fff" stroke="#555"/><path d="M14 8Q17 12 14 16M17 5Q22 12 17 19" fill="none" stroke="#fff" stroke-width="1.500"/></svg>
      <svg width="26" height="26" viewBox="0 0 26 26"><circle cx="13" cy="13" r="12" fill="#3aa335"/><circle cx="11" cy="13" r="10" fill="#f6e21c"/><path d="M11 7V19M5 13H17" stroke="#1c5f1c" stroke-width="3"/></svg>
      <svg width="26" height="26" viewBox="0 0 26 26"><path d="M8 5H24V20H8Z" fill="#667" stroke="#fff" stroke-width="2"/><path d="M2 1V8H8V1M5 8V22H10" fill="none" stroke="#fff" stroke-width="2"/><path d="M12 25L18 14L24 25Z" fill="#f7c427"/></svg>
      <svg width="22" height="26" viewBox="0 0 22 26"><path d="M2 8H13V20H2Z" fill="#555" stroke="#fff" stroke-width="2"/><path d="M10 6H20V12Q20 17 15 17Q10 17 10 12ZM13 6V1M17 6V1M15 17V24H6" fill="#fff" stroke="#fff" stroke-width="2"/></svg>
      <svg width="26" height="26" viewBox="0 0 26 26"><path d="M1 1H25V25H1Z" fill="#8492ad" stroke="#1c1c70" stroke-width="2"/><circle cx="13" cy="10" r="8" fill="#e5231f"/><path d="M8 5L18 15" stroke="#a00f0f" stroke-width="2"/><path d="M4 24H10V19H4ZM16 24H22V19H16Z" fill="#c33"/></svg>
      <time>上午 10:59</time>
    </div>
    <button class="desktop" aria-label="显示桌面"></button>
    <div class="mark-left"><span class="bili">bilibili</span>BV1Kb411W75N P453 08:29/16:25</div>
    <div class="mark-right">https://blog.csdn.net/dengdengdecai</div>
  </footer>
</body>
</html>
```
FILE: styles.css
```css
* {
  box-sizing: border-box;
}
body {
  margin: 0;
  height: 100vh;
  display: flex;
  flex-direction: column;
  overflow: hidden;
  font-family: "Noto Sans", "Noto Sans CJK SC", sans-serif;
  font-size: 18px;
  line-height: 24px;
  color: #444;
  background: #e5e5e5;
}
button {
  border: 0;
  padding: 0;
  background: none;
  font: inherit;
  color: inherit;
  white-space: nowrap;
}
a {
  color: inherit;
  text-decoration: none;
}
svg {
  flex: none;
  overflow: visible;
}
.defs {
  position: absolute;
}
.dd {
  display: inline-block;
  flex: none;
  width: 8px;
  height: 5px;
  background: currentColor;
  clip-path: polygon(0 0, 100% 0, 50% 100%);
}
.dd.up {
  clip-path: polygon(50% 0, 100% 100%, 0 100%);
}

/* title bar */
.titlebar {
  position: relative;
  height: 52px;
  flex: none;
  display: flex;
  align-items: center;
  justify-content: space-between;
  padding: 0 26px 6px 32px;
  background: #c04e25;
  color: #fff;
}
.record-strip {
  position: absolute;
  top: 0;
  left: 56%;
  right: 6%;
  height: 6px;
  background: #0a0a18;
  border: 2px solid #f5f5f5;
  border-top: 1px solid #9cc;
}
.qat {
  display: flex;
  align-items: center;
  gap: 15px;
}
.qat button {
  display: flex;
  align-items: center;
  gap: 7px;
}
.qat .save {
  margin-right: 7px;
}
.qat .custom {
  margin-left: 8px;
}
.doc-title {
  position: absolute;
  left: 0;
  right: 0;
  text-align: center;
  margin: 0;
  top: 13px;
  font-size: 18px;
  font-weight: 400;
  pointer-events: none;
}
.win-controls {
  display: flex;
  gap: 53px;
}

/* tabs */
.tabs {
  height: 37px;
  flex: none;
  display: flex;
  align-items: stretch;
  background: #c04e25;
  color: #fff;
  line-height: 32px;
}
.tabs a {
  padding: 0 22px;
}
.tabs .file {
  padding: 0 34px 0 25px;
}
.tabs .active {
  padding: 0 20px;
  background: #f1f1f1;
  color: #c04e25;
}
.tell-me {
  display: flex;
  align-items: center;
  gap: 9px;
  margin: 0 0 2px 18px;
}
.tabs .login {
  margin-left: auto;
  padding: 0 15px;
}
.share {
  display: flex;
  align-items: center;
  gap: 6px;
  height: 34px;
  margin-right: 24px;
  padding: 0 11px;
  background: #9c3f1f;
}

/* ribbon */
.ribbon {
  display: flex;
  flex: none;
  height: 141px;
  padding-top: 5px;
  background: #f1f1f0;
  border-bottom: 2px solid #d2d2d2;
}
.group {
  position: relative;
  flex: none;
  display: flex;
  flex-direction: column;
}
.group::after {
  content: "";
  position: absolute;
  right: 0;
  top: 2px;
  bottom: 6px;
  width: 1px;
  background: #d0d0d0;
}
.g-clip { width: 175px; }
.g-slides { width: 182px; }
.g-font { width: 342px; }
.g-para { width: 451px; }
.g-draw { width: 497px; }
.g-edit { width: 112px; }
.body {
  display: flex;
  flex: none;
  height: 102px;
}
.label {
  padding-right: 25px;
  text-align: center;
  line-height: 36px;
  color: #555;
}
.g-slides .label,
.g-edit .label {
  padding-right: 2px;
}
.launch {
  position: absolute;
  right: 6px;
  bottom: 6px;
}
.off {
  color: #a0a0a0;
}
.big {
  display: flex;
  flex-direction: column;
  align-items: center;
  line-height: 23px;
  padding-top: 6px;
}
.big svg {
  height: 48px;
}
.big > .dd {
  margin-top: 9px;
}
.big span .dd {
  margin: 0 0 3px 5px;
}
.g-clip .big {
  width: 64px;
  padding-left: 10px;
}
.g-slides .big {
  width: 78px;
  padding-left: 8px;
}
.stack button {
  display: flex;
  align-items: center;
  gap: 5px;
  height: 34px;
}
.stack .dd {
  margin-left: 3px;
}
.stack .far {
  margin-left: 10px;
}
.g-clip .stack {
  margin-left: 9px;
}
.g-slides .stack {
  margin-left: 7px;
}
.rows {
  display: flex;
  flex-direction: column;
  gap: 12px;
  padding-top: 11px;
}
.g-font .rows {
  padding-left: 4px;
}
.row {
  display: flex;
  flex: none;
  align-items: center;
  height: 34px;
}
.row > .dd {
  margin: 0 4px;
}
.row button {
  display: flex;
  align-items: center;
  justify-content: center;
  height: 34px;
}
.w30 { width: 30px; }
.w33 { width: 33px; }
.w34 { width: 34px; }
.w38 { width: 38px; }
.sep {
  width: 1px;
  height: 32px;
  margin: 0 6px;
  background: #d5d5d5;
}
.sep.wide {
  margin: 0 8px;
}
.combo {
  position: relative;
  height: 34px;
}
.combo select {
  appearance: none;
  width: 100%;
  height: 34px;
  border: 1px solid #c6c6c6;
  border-radius: 0;
  padding: 0 4px;
  font: inherit;
  color: #a0a0a0;
  background: linear-gradient(#e3e3e3, #e3e3e3) right / 20px 100% no-repeat #fdfdfd;
}
.combo .dd {
  position: absolute;
  right: 6px;
  top: 15px;
}
.combo.name {
  width: 141px;
  margin-left: 2px;
}
.combo.size {
  width: 75px;
}
.grow,
.color {
  font-size: 22px;
}
.grow .dd,
.shrink .dd {
  align-self: flex-start;
  margin-top: 6px;
}
.ital {
  font-family: "Liberation Serif", serif;
  font-size: 20px;
  font-style: italic;
}
.row b,
.row u,
.shad {
  font-weight: 700;
}
.shad {
  text-shadow: 2px 2px 2px #bbb;
}
.strike {
  font-size: 14px;
  text-decoration: line-through;
}
.row .av {
  flex-direction: column;
  line-height: 18px;
}
.para-left {
  width: 254px;
  padding-left: 4px;
}
.ico-a {
  font-size: 16px;
  fill: #a0a0a0;
}
.ico-n {
  font-size: 9px;
  font-weight: 700;
  fill: #a0a0a0;
}
.ico-b {
  font-size: 12px;
  font-weight: 700;
  fill: #2e71bd;
  stroke: none;
}
.ico-r {
  font-size: 15px;
  font-weight: 700;
  fill: #444;
}
.ico-p {
  font-size: 16px;
  font-weight: 700;
  fill: #fff;
}
.gallery {
  display: flex;
  width: 206px;
  height: 92px;
  margin: 4px 0 0 7px;
  border: 1px solid #ababab;
  background: #fdfdfd;
}
.shapes {
  flex: 1;
  display: grid;
  grid-template-columns: repeat(6, 1fr);
  place-items: center;
}
.shapes svg {
  width: 24px;
  height: 24px;
  fill: none;
  stroke: #666;
  stroke-width: 1.5px;
}
.gal-scroll {
  width: 22px;
  display: flex;
  flex-direction: column;
  border-left: 1px solid #ababab;
}
.gal-scroll button {
  flex: 1;
  line-height: 20px;
  border-bottom: 1px solid #ababab;
}
.gal-scroll button:last-child {
  border-bottom: 0;
}
.gal-scroll .up {
  background: #e6e6e6;
  color: #b5b5b5;
}
.gal-scroll .up .dd {
  clip-path: polygon(50% 0, 100% 100%, 0 100%);
}
.gal-scroll .line {
  width: 10px;
  height: 10px;
  clip-path: polygon(0 0, 100% 0, 100% 20%, 0 20%, 0 45%, 100% 45%, 50% 100%, 0 45%);
}
.arrange {
  width: 58px;
  margin-left: 6px;
}
.quick {
  width: 78px;
  margin: 0 4px;
}
.g-edit .stack {
  margin-left: 9px;
}
.collapse {
  margin: 0 14px 6px auto;
  align-self: flex-end;
}

/* work area */
.work {
  flex: 1;
  min-height: 0;
  display: flex;
}
.slides-pane {
  width: 248px;
  flex: none;
  display: flex;
  justify-content: space-between;
  padding-right: 7px;
  border-right: 1px solid #b8b8b8;
  overflow: hidden;
}
.thumbs {
  list-style: none;
  margin: -44px 0 0;
  padding: 0;
}
.thumbs li {
  display: flex;
  height: 113px;
}
.thumbs span {
  width: 34px;
  margin-right: 8px;
  text-align: right;
  font-size: 22px;
  line-height: 16px;
}
.thumb {
  width: 147px;
  height: 86px;
  overflow: hidden;
  background: #fff;
  border: 1px solid #b5b5b5;
}
.thumbs .current {
  color: #e0653e;
}
.current .thumb {
  border: 0;
  outline: 4px solid #e97c58;
}
.t-title {
  font-size: 6px;
  font-weight: 700;
  fill: #222;
}
.t-logo {
  font-size: 4px;
  fill: #14766a;
}
.t-red {
  font-size: 4px;
  font-weight: 700;
  fill: #e0281c;
}
.t-xs {
  font-size: 4px;
  fill: #222;
}
.t-code {
  font-size: 4px;
  fill: #888;
}
.t-code.dark {
  fill: #333;
}
.t-line {
  fill: none;
  stroke: #bbb;
  stroke-width: 1px;
}
.vscroll {
  width: 24px;
  flex: none;
  display: flex;
  flex-direction: column;
  margin: 2px 0;
  background: #dadad9;
}
.vscroll button {
  display: flex;
  align-items: center;
  justify-content: center;
  height: 23px;
  background: #fff;
  border: 1px solid #bbb;
  color: #777;
}
.vscroll .dd {
  width: 11px;
  height: 7px;
}
.vscroll .bar {
  height: 75px;
  margin: 66px 0 auto;
  background: #fff;
  border: 1px solid #ababab;
}
.editor {
  flex: 1;
  min-width: 0;
  display: flex;
  flex-direction: column;
}
.stage {
  flex: 1;
  min-height: 0;
  padding: 24px 0 0 2px;
}
.slide {
  position: relative;
  width: 1307px;
  max-width: 100%;
  height: 736px;
  margin: 0 auto;
  background: #fdfefc;
  border: 1px solid #c5c5c5;
  font-family: "Liberation Sans", "Noto Sans CJK SC", sans-serif;
  color: #000;
}
.slide-head {
  display: flex;
  align-items: center;
  height: 63px;
  padding-right: 27px;
  border-bottom: 6px solid #127365;
}
.slide h2 {
  margin: 10px auto 0 46px;
  font-size: 44px;
  line-height: 50px;
}
.slide h2 span {
  font-weight: 300;
}
.brand {
  display: flex;
  align-items: center;
  gap: 4px;
  margin-top: 4px;
  font-size: 34px;
  font-weight: 700;
  line-height: 36px;
  color: #14766a;
}
.question {
  margin: 49px 0 0 80px;
  font-size: 44px;
  font-weight: 300;
  line-height: 50px;
  white-space: pre;
  color: #ee2a1a;
}
.points {
  width: 356px;
  height: 250px;
  margin: 121px 0 0 17px;
  padding: 10px 15px 0 54px;
  list-style: none;
  background: #c5dcb2;
  font-size: 32px;
  font-weight: 300;
  line-height: 38px;
  text-align: justify;
}
.points li {
  position: relative;
  margin-bottom: 43px;
}
.points li::before {
  content: "";
  position: absolute;
  left: -39px;
  top: 9px;
  width: 20px;
  height: 20px;
  border-radius: 50%;
  background: #000;
}
.diagram {
  position: absolute;
  inset: 0;
  width: 100%;
  height: 100%;
}
.box {
  filter: drop-shadow(0 3px 2px rgba(0, 0, 0, 0.4));
}
.names {
  font-size: 32px;
  fill: #061522;
}
.values {
  font-size: 35px;
  fill: #fff6ea;
  text-anchor: middle;
}
.motto {
  font-size: 28px;
  font-style: italic;
  fill: #d3d3d3;
  text-anchor: end;
}
.spot {
  fill: #ffff00;
  mix-blend-mode: multiply;
}
.ink path {
  fill: none;
  stroke: #f5200f;
  stroke-width: 5px;
  stroke-linecap: round;
  stroke-linejoin: round;
  vector-effect: non-scaling-stroke;
}
.notes {
  height: 63px;
  flex: none;
  margin-left: 2px;
  padding: 10px 14px;
  border-top: 2px solid #c8c8c8;
  font-size: 22px;
}
.main-scroll {
  margin: 2px 1px 0 0;
  padding-bottom: 94px;
  background: #e0e0e0;
}
.main-scroll .bar {
  height: 24px;
  margin-top: 80px;
}
.main-scroll .page {
  height: 26px;
  background: none;
  border: 0;
}

/* status bar */
.status {
  height: 34px;
  flex: none;
  display: flex;
  align-items: center;
  padding: 0 0 2px 12px;
  border-top: 2px solid #c8c8c8;
  background: #f0f0ef;
}
.count {
  width: 244px;
}
.lang {
  margin-left: 24px;
}
.status-right {
  display: flex;
  align-items: center;
  height: 100%;
  margin-left: auto;
  padding-right: 10px;
}
.note-btn {
  display: flex;
  align-items: center;
  gap: 6px;
  margin-right: 29px;
}
.view {
  width: 57px;
  height: 32px;
  display: flex;
  align-items: center;
  justify-content: center;
}
.view.on {
  background: #c9c9c9;
}
.ime {
  display: flex;
  align-items: center;
  justify-content: space-between;
  width: 222px;
  height: 32px;
  padding: 0 11px 0 4px;
  background: #fbfdff;
  border: 1px solid #c5d3e2;
}
.ime b {
  font-size: 22px;
  color: #3f83cf;
}
.plus {
  width: 40px;
  font-size: 24px;
  font-weight: 700;
}
.zoom {
  width: 57px;
  margin-left: 10px;
}

/* taskbar */
.taskbar {
  position: relative;
  height: 46px;
  flex: none;
  display: flex;
  align-items: center;
  background: linear-gradient(#5a6a84 0, #5a6a84 1px, #8797b0 3px, #7f91ad 100%);
  color: #fff;
}
.start {
  width: 56px;
  margin: 0 0 6px 12px;
}
.start svg {
  display: block;
}
.pins {
  display: flex;
  gap: 40px;
  margin-left: 40px;
}
.pins svg {
  display: block;
}
.pins a {
  display: flex;
  align-items: center;
}
.tasks {
  display: flex;
  gap: 4px;
  margin-left: 22px;
}
.tasks button {
  display: flex;
  align-items: center;
  gap: 7px;
  width: 192px;
  height: 43px;
  padding-left: 12px;
  overflow: hidden;
  border: 1px solid #4a5870;
  border-radius: 3px;
  box-shadow: inset 0 0 0 1px rgba(255, 255, 255, 0.35);
  background: linear-gradient(170deg, #b4bece 0, #94a2ba 45%, #8393ae 60%, #8a9ab5 100%);
}
.tasks .on {
  background: linear-gradient(170deg, #dde1e8 0, #b9c2d1 50%, #abb6c8 100%);
}
.links {
  display: flex;
  align-items: center;
  gap: 11px;
  margin-left: 21px;
}
.links span {
  color: #dfe6f0;
}
.links a {
  display: flex;
  align-items: center;
  gap: 8px;
}
.links .more {
  margin: -20px 0 0 24px;
  font-size: 22px;
}
.tray {
  display: flex;
  align-items: center;
  gap: 12px;
  margin-left: auto;
}
.sogou {
  margin-bottom: 6px;
}
.tri {
  margin: 0 10px 0 16px;
}
.tray time {
  margin: 0 20px 0 14px;
}
.desktop {
  width: 21px;
  height: 46px;
  border: 1px solid #3f4b5f;
  background: linear-gradient(135deg, #a2adbd, #5b6a80);
}
.mark-left {
  position: absolute;
  left: 24px;
  top: 3px;
  font-family: "Liberation Sans", sans-serif;
  font-weight: 700;
  font-size: 22px;
  color: rgba(255, 255, 255, 0.25);
}
.bili {
  display: inline-block;
  width: 77px;
}
.mark-right {
  position: absolute;
  right: 10px;
  top: 16px;
  font-family: "Liberation Sans", sans-serif;
  font-size: 16px;
  color: rgba(255, 255, 255, 0.85);
}
```
